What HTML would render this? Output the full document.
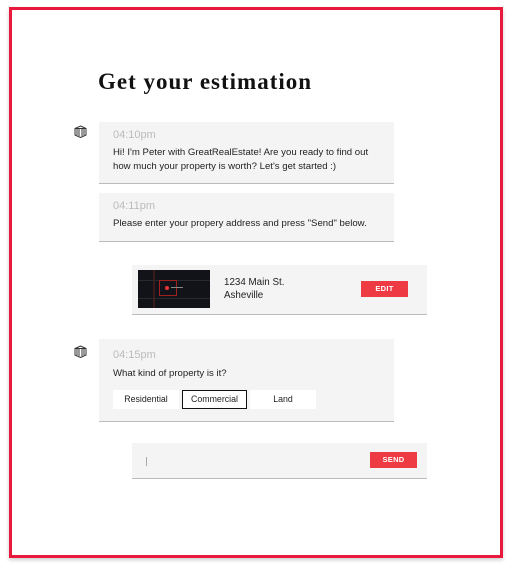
<!DOCTYPE html>
<html><head><style>
*{margin:0;padding:0;box-sizing:border-box}
body{width:513px;height:570px;background:#fff;position:relative;font-family:"Liberation Sans",sans-serif;overflow:hidden}
.frame{position:absolute;left:9px;top:7px;width:494px;height:551px;border:3.5px solid #e8193c;box-shadow:0 2px 4px rgba(0,0,0,.2)}
h1{position:absolute;left:98px;top:69px;font-family:"Liberation Serif",serif;font-size:23px;font-weight:bold;letter-spacing:1px;color:#111}
.b{position:absolute;background:#f4f4f4;border-bottom:1.5px solid #bbb}
.t{position:absolute;left:14px;color:#bbb;font-size:11px}
.m{position:absolute;left:14px;color:#222;font-size:9.6px;line-height:14px}
.btn{position:absolute;background:#ee3a43;color:#fff;font-size:7.5px;font-weight:bold;text-align:center;letter-spacing:.3px}
.o{position:absolute;top:51px;height:19px;background:#fff;font-size:8.8px;text-align:center;line-height:19px;color:#222}
.ic{position:absolute;left:74px;width:13px;height:13px}
</style></head><body>
<div class="frame"></div>
<h1>Get your estimation</h1>
<svg class="ic" style="top:125px" viewBox="0 0 13 13"><path d="M6.5 1L12 3.5V10L6.5 12.5 1 10V3.5Z M3 4V10M5 4V11M8 4V11M10 4V10M1 3.5H12" fill="none" stroke="#333" stroke-width="1"/></svg>
<div class="b" style="left:99px;top:122px;width:295px;height:62px">
<div class="t" style="top:7px">04:10pm</div>
<div class="m" style="top:24px">Hi! I'm Peter with GreatRealEstate! Are you ready to find out<br>how much your property is worth? Let's get started :)</div></div>
<div class="b" style="left:99px;top:193px;width:295px;height:49px">
<div class="t" style="top:7px">04:11pm</div>
<div class="m" style="top:24px">Please enter your propery address and press "Send" below.</div></div>
<div class="b" style="left:132px;top:265px;width:295px;height:50px">
<div style="position:absolute;left:6px;top:5px;width:72px;height:38px;background:#111318;overflow:hidden">
<div style="position:absolute;left:15px;top:0;width:2px;height:38px;background:#3a1a1a"></div>
<div style="position:absolute;left:0;top:10px;width:72px;height:1px;background:#2a2a2e"></div>
<div style="position:absolute;left:0;top:28px;width:72px;height:1px;background:#2a2a2e"></div>
<div style="position:absolute;left:21px;top:10px;width:18px;height:16px;border:1px solid #a02020"></div>
<div style="position:absolute;left:27px;top:16px;width:4px;height:4px;border-radius:2px;background:#e33"></div>
<div style="position:absolute;left:33px;top:17px;width:12px;height:1px;background:#888"></div></div>
<div class="m" style="left:92px;top:11px;font-size:9.8px;line-height:13px">1234 Main St.<br>Asheville</div>
<div class="btn" style="left:229px;top:16px;width:47px;height:16px;line-height:16px">EDIT</div></div>
<svg class="ic" style="top:345px" viewBox="0 0 13 13"><path d="M6.5 1L12 3.5V10L6.5 12.5 1 10V3.5Z M3 4V10M5 4V11M8 4V11M10 4V10M1 3.5H12" fill="none" stroke="#333" stroke-width="1"/></svg>
<div class="b" style="left:99px;top:339px;width:295px;height:83px">
<div class="t" style="top:10px">04:15pm</div>
<div class="m" style="top:28px">What kind of property is it?</div>
<div class="o" style="left:14px;width:66px">Residential</div>
<div class="o" style="left:83px;width:65px;border:1.5px solid #111;line-height:16px">Commercial</div>
<div class="o" style="left:151px;width:66px">Land</div></div>
<div class="b" style="left:132px;top:443px;width:295px;height:36px">
<div style="position:absolute;left:14px;top:14px;width:1px;height:9px;background:#aaa"></div>
<div class="btn" style="left:238px;top:9px;width:47px;height:16px;line-height:16px">SEND</div></div>
</body></html>
